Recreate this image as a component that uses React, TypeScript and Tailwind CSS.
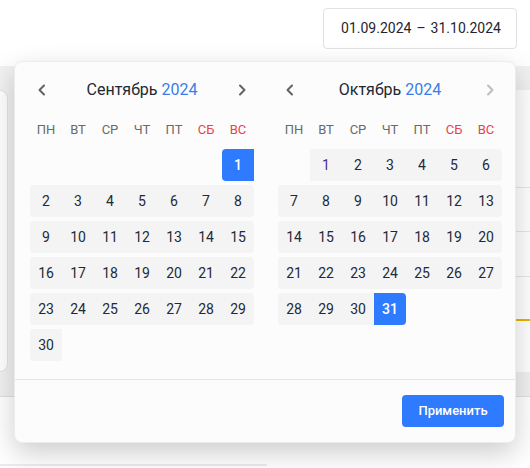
import React from "react";

const WEEKDAYS = ["ПН", "ВТ", "СР", "ЧТ", "ПТ", "СБ", "ВС"];

type Month = {
  name: string;
  year: number;
  offset: number;
  days: number;
  start?: number;
  end?: number;
  nextDisabled?: boolean;
};

const months: Month[] = [
  { name: "Сентябрь", year: 2024, offset: 6, days: 30, start: 1 },
  { name: "Октябрь", year: 2024, offset: 1, days: 31, end: 31, nextDisabled: true },
];

const Chevron = ({ dir, disabled }: { dir: "left" | "right"; disabled?: boolean }) => (
  <svg
    width="10"
    height="12"
    viewBox="0 0 10 12"
    fill="none"
    stroke={disabled ? "#bdbdbd" : "#5f6266"}
    strokeWidth="2"
    strokeLinecap="round"
    strokeLinejoin="round"
  >
    {dir === "left" ? <path d="M7 1.5 2.5 6 7 10.5" /> : <path d="M3 1.5 7.5 6 3 10.5" />}
  </svg>
);

const MonthGrid = ({ month }: { month: Month }) => {
  const cells: (number | null)[] = [];
  for (let i = 0; i < month.offset; i++) cells.push(null);
  for (let d = 1; d <= month.days; d++) cells.push(d);
  while (cells.length % 7 !== 0) cells.push(null);

  const rows: (number | null)[][] = [];
  for (let i = 0; i < cells.length; i += 7) rows.push(cells.slice(i, i + 7));

  return (
    <div className="w-[224px]">
      {/* Header */}
      <div className="flex h-8 items-center justify-between">
        <button className="flex h-6 w-6 items-center justify-center">
          <Chevron dir="left" />
        </button>
        <p className="text-[16px] text-[#212833]">
          {month.name} <span className="text-[#3b7de9]">{month.year}</span>
        </p>
        <button className="flex h-6 w-6 items-center justify-center">
          <Chevron dir="right" disabled={month.nextDisabled} />
        </button>
      </div>

      {/* Weekdays */}
      <div className="mt-[14px] grid h-5 grid-cols-7 items-center">
        {WEEKDAYS.map((w, i) => (
          <span
            key={w}
            className={
              i >= 5
                ? "text-center text-[13px] text-[#ea4249]"
                : "text-center text-[13px] text-[#6a6a6a]"
            }
          >
            {w}
          </span>
        ))}
      </div>

      {/* Days */}
      <div className="mt-[9px] flex flex-col gap-1">
        {rows.map((row, r) => (
          <div key={r} className="grid grid-cols-7">
            {row.map((d, c) => {
              if (d === null) return <div key={c} className="h-8" />;
              const isStart = d === month.start;
              const isEnd = d === month.end;
              const selected = isStart || isEnd;
              let round = "";
              if (isStart) round = "rounded-l";
              else if (isEnd) round = "rounded-r";
              else if (c === 0) round = "rounded-l";
              else if (c === 6) round = "rounded-r";
              const color = selected
                ? "bg-[#2f7bff] text-white font-medium"
                : month.name === "Октябрь" && d === 1
                ? "bg-[#f4f4f4] text-[#4a2c91]"
                : "bg-[#f4f4f4] text-[#1f2a37]";
              return (
                <div
                  key={c}
                  className={`flex h-8 items-center justify-center text-[14px] ${color} ${round}`}
                >
                  {d}
                </div>
              );
            })}
          </div>
        ))}
      </div>
    </div>
  );
};

const App = () => {
  return (
    <div
      className="relative h-[468px] w-[530px] overflow-hidden bg-white"
      style={{ fontFamily: "Roboto, 'Liberation Sans', sans-serif" }}
    >
      {/* Page header */}
      <div className="flex h-[57px] justify-end pt-2 pr-[13px]">
        <div className="flex h-[41px] w-[194px] items-center justify-center rounded border border-[#e2e2e2] bg-white pl-[2px] text-[14px] text-[#1f2530]">
          01.09.2024<span className="px-[5px]">–</span>31.10.2024
        </div>
      </div>

      {/* Background content */}
      <div className="h-[9px]" />
      <div className="h-6 bg-[#f1f1f1]" />
      <div className="flex h-[282px] bg-[#f1f1f1]">
        <div className="w-2 rounded-r-lg border border-l-0 border-[#e4e4e4] bg-white" />
        <div className="flex-1" />
        <div className="flex w-[30px] flex-col bg-white">
          <div className="h-[98px] border-b border-[#e6e6e6]" />
          <div className="h-[44px] border-b border-[#e6e6e6]" />
          <div className="h-[45px] border-b border-[#e6e6e6]" />
          <div className="h-[44px] border-b-2 border-[#e8b400]" />
        </div>
      </div>
      <div className="h-[25px] border-b border-[#e0e0e0] bg-[#f1f1f1]" />
      <div className="h-[67px]" />
      <div className="flex w-[267px] border-t-2 border-[#ececec]">
        <div className="w-[31px] border-r border-[#e0e0e0]" />
        <div className="w-[186px] border-r border-[#e0e0e0]" />
      </div>

      {/* Date range popover */}
      <div className="absolute left-[14px] top-[61px] w-[502px] rounded-lg border border-[#ececec] bg-[#fcfcfc] shadow-[0_10px_28px_rgba(0,0,0,0.2)]">
        <div className="flex gap-6 pl-[15px] pr-[13px] pt-[12px] pb-[18px]">
          {months.map((m) => (
            <MonthGrid key={m.name} month={m} />
          ))}
        </div>
        <div className="flex justify-end border-t border-[#e3e3e3] px-[11px] py-[15px]">
          <button className="h-8 w-[102px] rounded bg-[#2f7bff] text-[13px] font-medium text-white">
            Применить
          </button>
        </div>
      </div>
    </div>
  );
};

export default App;
